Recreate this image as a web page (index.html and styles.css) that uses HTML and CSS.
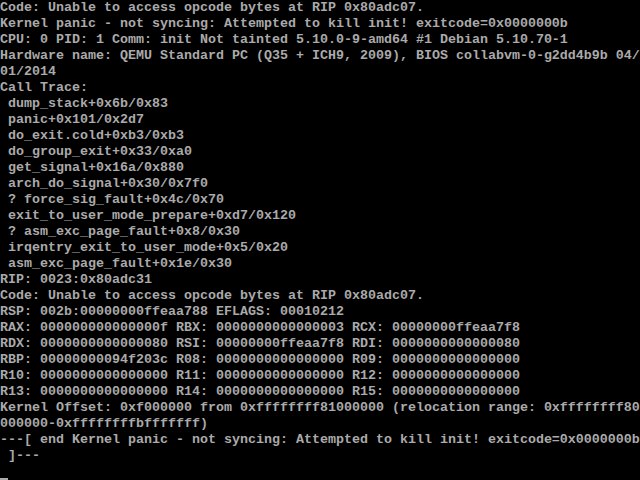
FILE: index.html
```html
<!DOCTYPE html>
<html>
<head>
<meta charset="utf-8">
<link rel="stylesheet" href="styles.css">
</head>
<body>
<pre class="console">Code: Unable to access opcode bytes at RIP 0x80adc07.
Kernel panic - not syncing: Attempted to kill init! exitcode=0x0000000b
CPU: 0 PID: 1 Comm: init Not tainted 5.10.0-9-amd64 #1 Debian 5.10.70-1
Hardware name: QEMU Standard PC (Q35 + ICH9, 2009), BIOS collabvm-0-g2dd4b9b 04/
01/2014
Call Trace:
 dump_stack+0x6b/0x83
 panic+0x101/0x2d7
 do_exit.cold+0xb3/0xb3
 do_group_exit+0x33/0xa0
 get_signal+0x16a/0x880
 arch_do_signal+0x30/0x7f0
 ? force_sig_fault+0x4c/0x70
 exit_to_user_mode_prepare+0xd7/0x120
 ? asm_exc_page_fault+0x8/0x30
 irqentry_exit_to_user_mode+0x5/0x20
 asm_exc_page_fault+0x1e/0x30
RIP: 0023:0x80adc31
Code: Unable to access opcode bytes at RIP 0x80adc07.
RSP: 002b:00000000ffeaa788 EFLAGS: 00010212
RAX: 000000000000000f RBX: 0000000000000003 RCX: 00000000ffeaa7f8
RDX: 0000000000000080 RSI: 00000000ffeaa7f8 RDI: 0000000000000080
RBP: 00000000094f203c R08: 0000000000000000 R09: 0000000000000000
R10: 0000000000000000 R11: 0000000000000000 R12: 0000000000000000
R13: 0000000000000000 R14: 0000000000000000 R15: 0000000000000000
Kernel Offset: 0xf000000 from 0xffffffff81000000 (relocation range: 0xffffffff80
000000-0xffffffffbfffffff)
---[ end Kernel panic - not syncing: Attempted to kill init! exitcode=0x0000000b
 ]---
<span class="cursor"></span></pre>
</body>
</html>
```
FILE: styles.css
```css
html, body {
  margin: 0;
  padding: 0;
  background: #000;
  width: 640px;
  height: 480px;
  overflow: hidden;
}
.console {
  margin: 0;
  padding: 0;
  color: #aaaaaa;
  font-family: "Liberation Mono", "DejaVu Sans Mono", monospace;
  font-size: 13.3333px;
  line-height: 16px;
  font-weight: bold;
  white-space: pre;
}
.cursor {
  display: inline-block;
  width: 8px;
  height: 16px;
  vertical-align: top;
  box-shadow: inset 0 -2px 0 #aaaaaa;
}
```
